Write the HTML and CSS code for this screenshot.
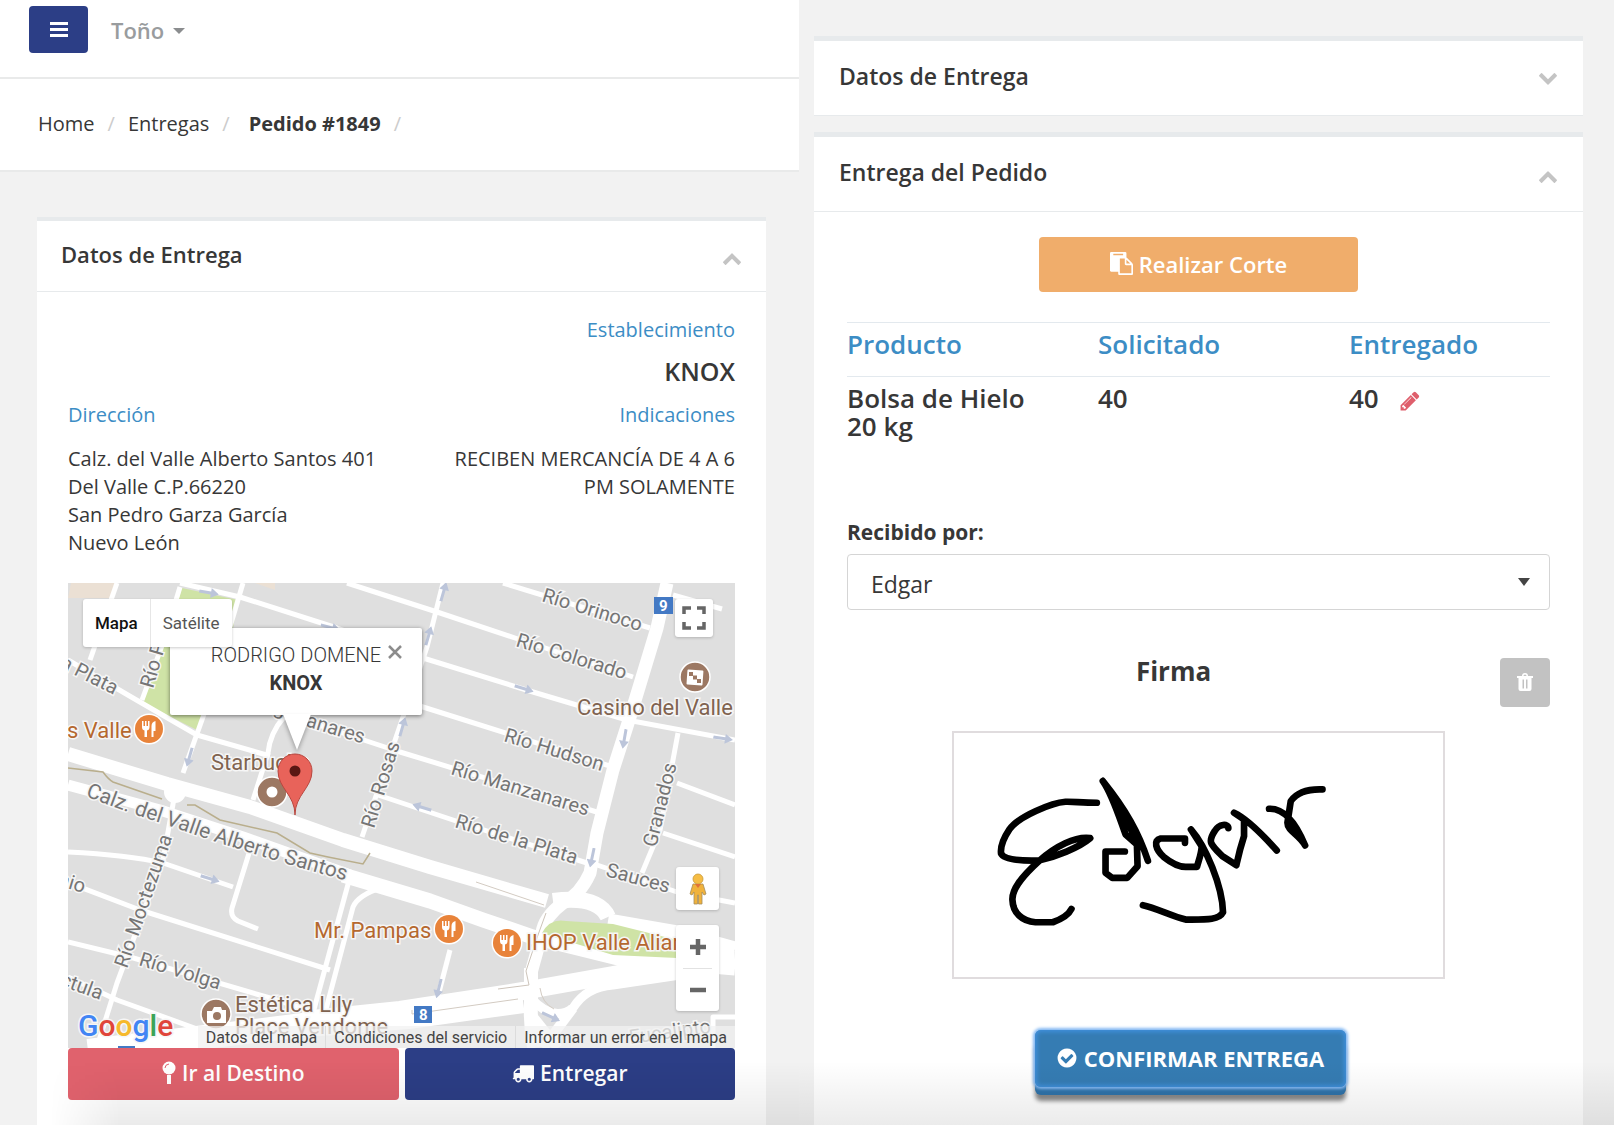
FILE: index.html
```html
<!DOCTYPE html>
<html lang="es">
<head>
<meta charset="utf-8">
<meta name="viewport" content="width=device-width, initial-scale=1">
<title>Pedido #1849</title>
<link rel="stylesheet" href="styles.css">
</head>
<body>
<svg class="defs" aria-hidden="true">
  <symbol id="chevron-up" viewBox="0 0 1792 1792"><path d="M1683 1331l-166 165q-19 19-45 19t-45-19l-531-531-531 531q-19 19-45 19t-45-19l-166-165q-19-19-19-45.500t19-45.500l742-741q19-19 45-19t45 19l742 741q19 19 19 45.500t-19 45.500z"/></symbol>
  <symbol id="food" viewBox="-16 -16 32 32"><circle r="15.500" fill="#fff"/><circle r="14" fill="#e8833a"/><path d="M-7 -8v6q0 3 2.500 3.500V8h2.500V1.500Q.5 1 .5 -2v-6h-1.500v5h-1.500v-5h-1.500v5h-1.500v-5zM2.500 8h2V2h2V-8q-4 1-4 5z" fill="#fff"/></symbol>
  <symbol id="arrow" viewBox="0 0 20 10"><path d="M0 3.500h12V0l8 5-8 5V6.500H0z" fill="#bcc5da"/></symbol>
</svg>
<div class="panes">
  <section class="pane pane-order">
    <header class="topbar">
      <button class="menu-btn" type="button" aria-label="Menú"><svg width="20" height="18" viewBox="0 0 20 18"><path d="M1 1h18v3H1zM1 7h18v3H1zM1 13h18v3H1z" fill="#fff"/></svg></button>
      <a class="user" href="#">Toño <svg width="12" height="9" viewBox="0 0 12 9"><path d="M0 3h12L6 9z" fill="#8b8d8f"/></svg></a>
    </header>
    <nav class="crumbs" aria-label="Ruta">
      <a href="#">Home</a><span class="sep">/</span><a href="#">Entregas</a><span class="sep">/</span><strong>Pedido #1849</strong><span class="sep">/</span>
    </nav>
    <div class="order-body">
      <article class="card">
        <header class="card-head">
          <h2>Datos de Entrega</h2>
          <button class="toggle" type="button" aria-label="Contraer"><svg><use href="#chevron-up"/></svg></button>
        </header>
        <div class="card-body">
          <div class="place">
            <h3>Establecimiento</h3>
            <p class="place-name">KNOX</p>
          </div>
          <div class="details">
            <div>
              <h3>Dirección</h3>
              <p>Calz. del Valle Alberto Santos 401<br>Del Valle C.P.66220<br>San Pedro Garza García<br>Nuevo León</p>
            </div>
            <div class="notes">
              <h3>Indicaciones</h3>
              <p>RECIBEN MERCANCÍA DE 4 A 6 PM SOLAMENTE</p>
            </div>
          </div>
          <div class="map">
            <svg class="map-canvas" viewBox="0 0 667 465" preserveAspectRatio="xMidYMid slice">
              <rect width="667" height="465" fill="#dfdfdf"/>
              <path d="M3 0h45l-4 15H0zM187 0h20v7z" fill="#ebe0d4"/>
              <path d="M114 5l56 12-8 45-33 85-54-27 20-56z" fill="#cfe3a6"/>
              <g class="roads">
                <path d="M112 0L172 14L269 45L355 75L465 109L559 137L667 157"/>
                <path d="M279 0L369 29L447 55L565 94"/>
                <path d="M435 0L582 45"/>
                <path d="M250 92L355 124L545 184"/>
                <path d="M220 132L332 169L532 230"/>
                <path d="M0 77L65 115L129 152L202 173"/>
                <path d="M216 134Q202 150 200 170L185 217"/>
                <path d="M310 212L385 237L519 280"/>
                <path d="M375 0L359 64L335 134L294 254"/>
                <path d="M175 0L162 44L135 134L115 190"/>
                <path d="M112 4L95 60L74 117"/>
                <path d="M49 0L22 77"/>
                <path d="M107 210L95 277L49 400L29 464"/>
                <path d="M0 269Q60 272 95 280L165 304"/>
                <path d="M182 267L164 325Q162 334 170 338L190 346"/>
                <path d="M-4 298L72 327L262 387"/>
                <path d="M0 359L62 374L202 415L250 430"/>
                <path d="M0 394L49 417L132 447"/>
                <path d="M282 294L245 430"/>
                <path d="M315 304Q290 312 285 324L257 430"/>
                <path d="M382 367L369 417"/>
                <path d="M610 150L592 247L574 290"/>
                <path d="M609 200L667 222M595 250L667 274"/>
                <path d="M529 282L609 309L667 320"/>
                <path d="M605 12L654 26"/>
                <path d="M667 434H645V465"/>
              </g>
              <g class="avenues">
                <path stroke-width="14" d="M0 171L99 201L182 224L275 257L362 284L479 318"/>
                <path stroke-width="11" d="M0 202L92 227L175 254L282 292"/>
                <path stroke-width="15" d="M275 292L362 318L415 337L465 354L550 375L667 385"/>
                <path stroke-width="13" d="M599 0L589 45L562 134L545 187L529 250L522 290Q512 312 495 320Q476 334 474 350L463 390"/>
                <path stroke-width="14" d="M463 385V420Q462 440 466 465"/>
                <path stroke-width="16" d="M485 318Q530 312 540 334"/>
                <path stroke-width="15" d="M540 338L609 350L667 366"/>
                <path stroke-width="18" d="M235 437L332 427L455 408L545 392L609 380L667 377"/>
                <path stroke-width="24" d="M20 468L129 455L235 442L340 434L455 418"/>
                <path stroke-width="9" d="M463 415Q485 440 505 425Q518 404 545 402L612 392"/>
                <path stroke-width="10" d="M462 430L490 465M505 425L475 465"/>
                <circle cx="107" cy="209" r="11" fill="#fff" stroke="none"/>
              </g>
              <path d="M474 350Q482 335 498 338L545 341L609 357V375L545 372L489 355z" fill="#cfe3a6"/>
              <path d="M478 330L470 352L458 388L461 402L430 406" fill="none" stroke="#cdc4ba"/>
              <path d="M344 427V431L450 416M408 299L476 322M472 405Q474 420 486 426" fill="none" stroke="#d3cbc2"/>
              <path d="M0 185L35 189Q40 196 45 199L94 216M119 222H127L152 237L209 250L242 270L260 274L295 281L302 270" fill="none" stroke="#b9ae8c" stroke-width="1.500"/>
              <g>
                <use href="#arrow" width="20" height="10" transform="translate(132 3) rotate(10)"/>
                <use href="#arrow" width="20" height="10" transform="translate(254 37) rotate(15)"/>
                <use href="#arrow" width="20" height="10" transform="translate(448 98) rotate(17)"/>
                <use href="#arrow" width="20" height="10" transform="translate(646 149) rotate(9)"/>
                <use href="#arrow" width="20" height="10" transform="translate(134 288) rotate(17)"/>
                <use href="#arrow" width="20" height="10" transform="translate(362 232) rotate(197)"/>
                <use href="#arrow" width="20" height="10" transform="translate(129 166) rotate(106)"/>
                <use href="#arrow" width="20" height="10" transform="translate(563 147) rotate(100)"/>
                <use href="#arrow" width="20" height="10" transform="translate(531 266) rotate(102)"/>
                <use href="#arrow" width="20" height="10" transform="translate(378 397) rotate(104)"/>
                <use href="#arrow" width="20" height="10" transform="translate(476 425) rotate(25)"/>
                <use href="#arrow" width="20" height="10" transform="translate(353 61) rotate(-74)"/>
                <use href="#arrow" width="20" height="10" transform="translate(368 17) rotate(-74)"/>
                <use href="#arrow" width="20" height="10" transform="translate(327 152) rotate(-74)"/>
              </g>
              <g class="streets">
                <text transform="translate(473 18) rotate(17)">Río Orinoco</text>
                <text transform="translate(447 63) rotate(17)">Río Colorado</text>
                <text transform="translate(435 158) rotate(17)">Río Hudson</text>
                <text transform="translate(382 191) rotate(17)">Río Manzanares</text>
                <text transform="translate(386 244) rotate(17)">Río de la Plata</text>
                <text transform="translate(537 293) rotate(15)">Sauces</text>
                <text transform="translate(588 265) rotate(-76)">Granados</text>
                <text transform="translate(306 246) rotate(-73)">Río Rosas</text>
                <text transform="translate(85 106) rotate(-74)">Río P</text>
                <text transform="translate(-9 84) rotate(27)">a Plata</text>
                <text transform="translate(205 130) rotate(17)">g</text>
                <text transform="translate(237 143) rotate(17)">anares</text>
                <text transform="translate(59 386) rotate(-71)">Río Moctezuma</text>
                <text transform="translate(-11 302) rotate(17)">nio</text>
                <text transform="translate(70 382) rotate(17)">Río Volga</text>
                <text transform="translate(-9 402) rotate(20)">ctula</text>
                <text transform="translate(562 461) rotate(-8)">Eucalipto</text>
                <path id="calzada" d="M17 213Q60 230 99 242L145 258L212 279L300 304" fill="none" stroke="none"/>
                <text class="wide"><textPath href="#calzada">Calz. del Valle Alberto Santos</textPath></text>
              </g>
              <g class="food">
                <text x="-1" y="155">s Valle</text>
                <text x="246" y="355">Mr. Pampas</text>
                <text x="458" y="367">IHOP Valle Alianza</text>
              </g>
              <g class="poi">
                <text x="509" y="132">Casino del Valle</text>
                <text x="143" y="187">Starbucks</text>
                <text x="167" y="429">Estética Lily</text>
                <text x="167" y="451">Place Vendome</text>
              </g>
              <use href="#food" x="65" y="130" width="32" height="32"/>
              <use href="#food" x="365" y="330" width="32" height="32"/>
              <use href="#food" x="423" y="344" width="32" height="32"/>
              <g fill="#9c7863" stroke="#fff" stroke-width="1.500">
                <circle cx="204" cy="209" r="15"/><circle cx="627" cy="94" r="15"/><circle cx="148" cy="431" r="15"/>
              </g>
              <circle cx="204" cy="209" r="5.500" fill="#fff"/>
              <rect x="619" y="87" width="16" height="15" rx="1" fill="#fff" transform="rotate(4 627 94)"/>
              <path d="M621 89h4v4h-4zM625 92.500h4v4h-4zM629 96h4v4h-4z" fill="#9c7863"/>
              <path d="M139 428h5l2-4h7l1 3h4v13h-19z" fill="#fff"/><circle cx="149" cy="433" r="4" fill="#9c7863"/>
              <g class="shield">
                <rect x="586" y="14" width="19" height="17"/><text x="591" y="28">9</text>
                <rect x="346" y="423" width="18" height="17"/><text x="351" y="437">8</text>
                <rect x="50" y="463" width="17" height="2"/>
              </g>
              <path d="M227 232c0-20-17-27-17-44a17 17 0 0 1 34 0c0 17-17 24-17 44z" fill="#e8635a" stroke="#b8473f"/>
              <circle cx="227" cy="188" r="5.500" fill="#5a1713"/>
              <text class="brand" x="10" y="453"><tspan fill="#4285f4">G</tspan><tspan fill="#e0453a">o</tspan><tspan fill="#f6b92c">o</tspan><tspan fill="#4285f4">g</tspan><tspan fill="#3ba557">l</tspan><tspan fill="#e0453a">e</tspan></text>
            </svg>
            <div class="popup">
              <p>RODRIGO DOMENE<br><b>KNOX</b></p>
              <button type="button" aria-label="Cerrar"><svg width="14" height="14" viewBox="0 0 14 14"><path d="M1 1l12 12M13 1L1 13" stroke="#8c8c8c" stroke-width="2.500"/></svg></button>
              <svg class="tail" width="28" height="36" viewBox="0 0 28 36"><path d="M0 0h28L14 36z" fill="#fff"/></svg>
            </div>
            <div class="map-type"><button type="button" class="on">Mapa</button><button type="button">Satélite</button></div>
            <button class="map-btn full" type="button" aria-label="Pantalla completa"><svg width="24" height="24" viewBox="0 0 24 24"><path d="M2 8V2h7M15 2h7v6M22 16v6h-7M9 22H2v-6" fill="none" stroke="#666" stroke-width="3.500"/></svg></button>
            <button class="map-btn pegman" type="button" aria-label="Street View"><svg width="20" height="32" viewBox="0 0 20 32"><path d="M5 11h10l3 10-2 1-2-3v12h-3.500V22h-1V31H6V19l-2 3-2-1z" fill="#f0b23c" stroke="#a58d5b" stroke-width=".8"/><circle cx="10" cy="6" r="5" fill="#f6bd45" stroke="#c99a3a" stroke-width=".8"/><path d="M7 11h6l-3 4z" fill="#e1713a"/></svg></button>
            <div class="zoomer">
              <button type="button" aria-label="Acercar"><svg width="16" height="16" viewBox="0 0 16 16"><path d="M0 8h16M8 0v16" stroke="#666" stroke-width="4.500"/></svg></button>
              <button type="button" aria-label="Alejar"><svg width="16" height="16" viewBox="0 0 16 16"><path d="M0 8h16" stroke="#666" stroke-width="4.500"/></svg></button>
            </div>
            <div class="legal"><a href="#">Datos del mapa</a><a href="#">Condiciones del servicio</a><a href="#">Informar un error en el mapa</a></div>
          </div>
          <div class="actions">
            <button class="btn btn-danger" type="button"><svg width="14" height="24" viewBox="0 0 14 24"><circle cx="7" cy="7" r="6.500" fill="#fff"/><path d="M5 14h4v9H5z" fill="#fff"/><path d="M3 7q0-3.500 4-4" fill="none" stroke="#e0626d"/></svg>Ir al Destino</button>
            <button class="btn btn-primary" type="button"><svg width="22" height="22" viewBox="0 0 1792 1792"><path fill="#fff" d="M640 1408q0-52-38-90t-90-38-90 38-38 90 38 90 90 38 90-38 38-90zm-384-512h384v-256h-158q-13 0-22 9l-195 195q-9 9-9 22v30zm1280 512q0-52-38-90t-90-38-90 38-38 90 38 90 90 38 90-38 38-90zm256-1088v1024q0 15-4 26.500t-13.500 18.500-16.500 11.500-23.500 6-22.500 2-25.500 0-22.500-.5q0 106-75 181t-181 75-181-75-75-181h-384q0 106-75 181t-181 75-181-75-75-181h-64q-3 0-22.500.5t-25.500 0-22.500-2-23.500-6-16.500-11.500-13.500-18.500-4-26.500q0-26 19-45t45-19v-320q0-8-.5-35t0-38 2.500-34.500 6.500-37 14-30.500 22.500-30l198-198q19-19 50.500-32t58.500-13h160v-192q0-26 19-45t45-19h1024q26 0 45 19t19 45z"/></svg>Entregar</button>
          </div>
        </div>
      </article>
    </div>
  </section>

  <section class="pane pane-delivery">
    <article class="card">
      <header class="card-head">
        <h2>Datos de Entrega</h2>
        <button class="toggle closed" type="button" aria-label="Expandir"><svg><use href="#chevron-up"/></svg></button>
      </header>
    </article>
    <article class="card grow">
      <header class="card-head">
        <h2>Entrega del Pedido</h2>
        <button class="toggle" type="button" aria-label="Contraer"><svg><use href="#chevron-up"/></svg></button>
      </header>
      <div class="card-body">
        <button class="btn btn-warning" type="button"><svg width="23" height="23" viewBox="0 0 1792 1792"><path fill="#fff" d="M768 1664h896v-640h-416q-40 0-68-28t-28-68v-416h-384v1152zm256-1440v-64q0-13-9.500-22.500t-22.500-9.500h-704q-13 0-22.500 9.500t-9.500 22.500v64q0 13 9.500 22.500t22.500 9.500h704q13 0 22.500-9.500t9.500-22.500zm256 672h299l-299-299v299zm512 128v672q0 40-28 68t-68 28h-960q-40 0-68-28t-28-68v-160h-544q-40 0-68-28t-28-68v-1344q0-40 28-68t68-28h1088q40 0 68 28t28 68v328q21 13 36 28l408 408q28 28 48 76t20 88z"/></svg>Realizar Corte</button>
        <table class="products">
          <thead><tr><th>Producto</th><th>Solicitado</th><th>Entregado</th></tr></thead>
          <tbody><tr><td>Bolsa de Hielo 20 kg</td><td>40</td><td>40<a class="edit" href="#" aria-label="Editar"><svg width="22" height="22" viewBox="0 0 1792 1792"><path fill="#df5f6c" d="M491 1536l91-91-235-235-91 91v107h128v128h107zm523-928q0-22-22-22-10 0-17 7l-542 542q-7 7-7 17 0 22 22 22 10 0 17-7l542-542q7-7 7-17zm-54-192l416 416-832 832h-416v-416zm683 96q0 53-37 90l-166 166-416-416 166-165q36-38 90-38 53 0 91 38l235 234q37 39 37 91z"/></svg></a></td></tr></tbody>
        </table>
        <label class="field-label" for="receiver">Recibido por:</label>
        <div class="select-wrap">
          <select id="receiver"><option>Edgar</option></select>
          <svg width="14" height="8" viewBox="0 0 14 8"><path d="M1 0h12L7 8z" fill="#444"/></svg>
        </div>
        <div class="sign-head">
          <h3>Firma</h3>
          <button class="trash" type="button" aria-label="Borrar firma"><svg width="16" height="18" viewBox="0 0 16 18"><path d="M0 3h5q0-3 3-3t3 3h5v2h-1.500v11q0 2-2 2h-9q-2 0-2-2V5H0zM6.500 3h3q0-1.500-1.500-1.500T6.500 3zM5.500 6.500v9H7v-9zM9 6.500v9h1.500v-9z" fill="#fff" fill-rule="evenodd"/></svg></button>
        </div>
        <div class="sign-pad">
          <svg viewBox="46 41 1465 731" role="img" aria-label="Firma de Edgar" fill="none" stroke="#000" stroke-width="20" stroke-linecap="round" stroke-linejoin="round">
            <path d="M474 250C430 250 400 246 380 247C340 250 240 290 212 330C192 360 185 385 187 402C197 423 260 424 300 423C350 412 420 385 454 356C410 350 350 380 300 425C245 475 220 510 221 540C222 580 250 605 290 608H342C370 598 390 585 398 568"/>
            <path d="M492 185C520 225 540 290 560 345L594 375L596 440L565 475H520L500 460V396H558M492 185C560 270 600 340 627 424M492 185C530 240 580 330 596 375"/>
            <path d="M738 370V357H665C642 362 650 390 674 412C700 433 720 442 740 442H774C780 420 788 400 788 380L756 330M756 330C800 380 850 500 852 578C840 602 800 600 740 600C700 590 650 565 612 557"/>
            <path d="M868 326C868 312 840 312 827 335C805 368 815 375 850 410L892 437C900 400 902 390 915 350V300L885 280C920 296 970 345 1013 393"/>
            <path d="M990 268C1030 266 1066 300 1098 378C1080 345 1045 335 1045 310L1055 245C1070 224 1100 208 1150 210"/>
          </svg>
        </div>
        <div class="confirm-row">
          <button class="confirm" type="button"><svg width="22" height="22" viewBox="0 0 1792 1792"><path fill="#fff" d="M1412 734q0-28-18-46l-91-90q-19-19-45-19t-45 19l-408 407-226-226q-19-19-45-19t-45 19l-91 90q-18 18-18 46 0 27 18 45l362 362q19 19 45 19 27 0 46-19l543-543q18-18 18-45zm252 162q0 209-103 385.500t-279.500 279.500-385.500 103-385.500-103-279.500-279.500-103-385.500 103-385.500 279.500-279.500 385.500-103 385.500 103 279.500 279.500 103 385.500z"/></svg>CONFIRMAR ENTREGA</button>
        </div>
      </div>
    </article>
  </section>
</div>
</body>
</html>
```

FILE: styles.css
```css
* { box-sizing: border-box; }

body {
  margin: 0;
  background: #f2f2f2;
  color: #373737;
  font: 20px/28px "Open Sans", "Noto Sans", sans-serif;
}

h2, h3, p { margin: 0; }
a { color: inherit; text-decoration: none; }
button { margin: 0; padding: 0; border: 0; background: none; color: inherit; font: inherit; cursor: pointer; }
svg { display: block; }
.defs { position: absolute; width: 0; height: 0; }

.panes {
  display: grid;
  grid-template-columns: 799fr 815fr;
  min-height: 100vh;
}
.pane { display: flex; flex-direction: column; position: relative; }
.pane::after {
  content: "";
  position: absolute;
  inset: auto 0 0 0;
  height: 64px;
  background: linear-gradient(transparent, rgba(0, 0, 0, .08));
  pointer-events: none;
}
.pane-order::after {
  mask-image: linear-gradient(to right, transparent 50px, #000 120px);
}

/* Top bar and breadcrumbs */
.topbar {
  display: flex;
  gap: 23px;
  height: 79px;
  padding: 6px 29px;
  background: #fff;
  border-bottom: 2px solid #e9eaea;
}
.menu-btn {
  display: grid;
  place-items: center;
  width: 59px;
  height: 47px;
  border-radius: 4px;
  background: #2c3e86;
}
.user {
  display: flex;
  align-items: center;
  gap: 9px;
  height: 47px;
  color: #999c9e;
  font-size: 22px;
  font-weight: 600;
}
.crumbs {
  display: flex;
  gap: 13px;
  padding: 31px 38px 32px;
  background: #fff;
  border-bottom: 2px solid #e9eaea;
}
.crumbs .sep { color: #ccc; }
.crumbs strong { margin-left: 6px; }

/* Cards */
.order-body { display: flex; flex: 1; flex-direction: column; padding: 45px 33px 0 37px; }
.order-body .card { flex: 1; }
.card { background: #fff; border-top: 4px solid #e7eaec; }
.card-head {
  display: flex;
  justify-content: space-between;
  padding: 18px 24px 22px;
  border-bottom: 1px solid #e7eaec;
}
.card-head h2 { font-size: 22px; font-weight: 600; line-height: 30px; }
.toggle { height: 20px; margin-top: 9px; }
.toggle svg { width: 20px; height: 20px; fill: #c4c4c4; }
.toggle.closed svg { transform: scaleY(-1); }
.card-body { padding: 24px 31px 25px; }
.card h3 { color: #3c8dc5; font-size: 20px; font-weight: 400; }

.place { text-align: right; }
.place-name { margin: 13px 0 16px; font-size: 25px; font-weight: 600; }
.details { display: grid; grid-template-columns: 11fr 10fr; gap: 24px; margin-bottom: 26px; }
.details p { margin-top: 16px; }
.notes { text-align: right; }

/* Map */
.map { position: relative; height: 465px; overflow: hidden; font-family: Roboto, sans-serif; }
.map-canvas { width: 100%; height: 100%; }
.roads { fill: none; stroke: #fff; stroke-width: 5; stroke-linejoin: round; }
.avenues { fill: none; stroke: #fff; stroke-linejoin: round; }
.map-canvas text { font: 20px Roboto, sans-serif; paint-order: stroke; stroke: #f6f6f6; stroke-width: 3px; }
.map-canvas .wide { font-size: 21px; }
.streets text { fill: #757575; }
.food text { fill: #b5682f; }
.poi text { fill: #806350; }
.map-canvas .food text, .map-canvas .poi text { font-size: 22px; }
.shield rect { fill: #4379c4; }
.map-canvas .shield text { fill: #fff; stroke: none; font-size: 15px; font-weight: 700; }
.map-canvas .brand { font-size: 30px; font-weight: 500; }

.popup {
  position: absolute;
  top: 45px;
  left: 102px;
  width: 252px;
  height: 87px;
  padding-top: 13px;
  border-radius: 2px;
  background: #fff;
  box-shadow: 0 1px 4px rgba(0, 0, 0, .5);
  text-align: center;
}
.popup p { font-weight: 300; }
.popup b { font-weight: 700; }
.popup button { position: absolute; top: 17px; right: 20px; }
.tail { position: absolute; top: 86px; left: 113px; filter: drop-shadow(0 3px 2px rgba(0, 0, 0, .3)); }

.map-type {
  position: absolute;
  top: 16px;
  left: 15px;
  display: flex;
  height: 48px;
  border-radius: 3px;
  background: #fff;
  box-shadow: 0 1px 3px rgba(0, 0, 0, .2);
  font-size: 17px;
}
.map-type button { padding: 0 12px; color: #565656; }
.map-type .on { border-right: 1px solid #e6e6e6; color: #111; font-weight: 500; }

.map-btn, .zoomer {
  position: absolute;
  right: 16px;
  width: 43px;
  border-radius: 3px;
  background: #fff;
  box-shadow: 0 1px 3px rgba(0, 0, 0, .2);
}
.map-btn { display: grid; place-items: center; }
.full { top: 16px; right: 22px; width: 38px; height: 38px; }
.pegman { top: 284px; height: 43px; }
.zoomer { top: 342px; padding: 0 7px; }
.zoomer button { display: grid; place-items: center; width: 29px; height: 43px; }
.zoomer button + button { border-top: 1px solid #e2e2e2; }
.legal {
  position: absolute;
  right: 0;
  bottom: 0;
  display: flex;
  height: 22px;
  background: rgba(242, 242, 242, .75);
  color: #444;
  font-size: 16px;
  line-height: 23px;
}
.legal a { padding: 0 8px; }
.legal a + a { border-left: 1px solid #dcdcdc; }

/* Buttons */
.btn {
  display: flex;
  align-items: center;
  justify-content: center;
  gap: 6px;
  height: 52px;
  padding-bottom: 2px;
  border-radius: 4px;
  color: #fff;
  font-size: 21px;
  font-weight: 600;
}
.actions { display: grid; grid-template-columns: 1fr 1fr; gap: 6px; }
.btn-danger { background: #e0626d; }
.btn-primary { background: #2c3e86; }
.btn-warning { width: 319px; height: 55px; margin: 0 auto 30px; background: #f0ad6b; font-size: 22px; }

/* Delivery pane */
.pane-delivery { gap: 16px; padding: 36px 31px 0 15px; }
.pane-delivery .card { border-top-width: 5px; }
.pane-delivery .grow { flex: 1; }
.pane-delivery .card-head { padding: 20px 25px 24px; }
.pane-delivery .card-head h2 { font-size: 23px; }
.pane-delivery .card-body { padding: 25px 33px; }

.products { width: 100%; margin-bottom: 78px; border-collapse: collapse; table-layout: fixed; font-size: 26px; font-weight: 600; text-align: left; }
.products th, .products td { padding: 7px 24px 0 0; border-top: 1px solid #e3e9ee; font-weight: 600; vertical-align: top; }
.products th { height: 54px; color: #3c8dc5; }
.products th:nth-child(-n+2) { width: 251px; }
.products td { padding-right: 60px; }
.edit { display: inline-block; margin-left: 20px; vertical-align: -4px; }

.field-label { display: block; margin-bottom: 8px; font-size: 21px; font-weight: 700; }
.select-wrap { position: relative; margin-bottom: 48px; }
.select-wrap select {
  display: block;
  width: 100%;
  height: 56px;
  padding: 4px 23px 0;
  appearance: none;
  border: 1px solid #d5d5d5;
  border-radius: 4px;
  background: #fff;
  color: #373737;
  font: 23px "Open Sans", sans-serif;
}
.select-wrap svg { position: absolute; top: 24px; right: 19px; pointer-events: none; }

.sign-head { display: flex; margin-bottom: 24px; }
.sign-head h3 { flex: 1; color: #373737; font-size: 26px; font-weight: 700; line-height: 26px; text-align: center; }
.trash { display: grid; place-items: center; width: 50px; height: 49px; padding-bottom: 2px; border-radius: 4px; background: #c2c2c2; }
.sign-pad { width: 493px; max-width: 100%; margin: 0 auto 51px; border: 2px solid #e0dcde; }
.confirm-row { display: flex; justify-content: center; padding-right: 17px; }
.confirm {
  display: flex;
  align-items: center;
  justify-content: center;
  gap: 6px;
  width: 311px;
  height: 57px;
  border-radius: 6px;
  background: #357cb3;
  box-shadow: inset 0 0 4px 2px #4090dc, 0 0 3px 2px #85b9f3, 0 8px 0 #2f72a8, 0 14px 4px #888;
  color: #fff;
  font-size: 22px;
  font-weight: 700;
}
```
